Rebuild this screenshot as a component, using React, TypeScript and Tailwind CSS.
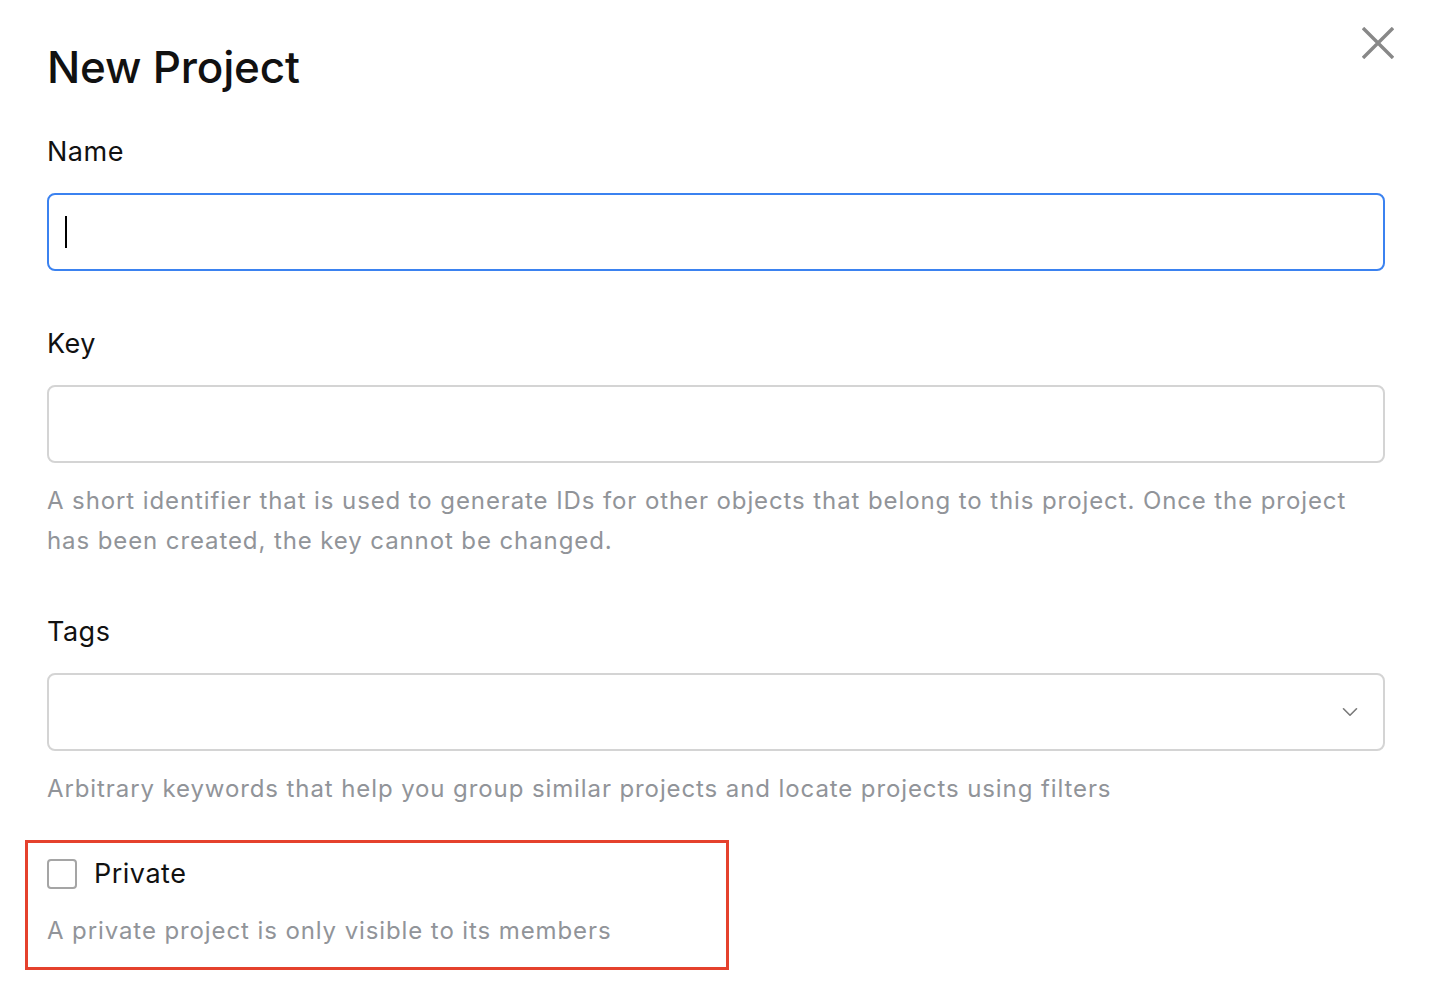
import { ChevronDown } from "lucide-react";

function Label({ children }: { children: string }) {
  return <p className="text-[27px] leading-[32px] tracking-[0.5px] text-[#111]">{children}</p>;
}

function Help({ children }: { children: string }) {
  return <p className="mt-[18px] text-[24px] leading-[40px] tracking-[0.9px] text-[#919499]">{children}</p>;
}

export default function App() {
  return (
    <div className="relative min-h-screen w-full bg-white pl-[47px] pr-[45px] pt-[40px] font-['Inter',sans-serif]">
      <button className="absolute right-[36px] top-[27px] text-[#888]" aria-label="Close">
        <svg width="32" height="32" viewBox="0 0 32 32" fill="none" stroke="currentColor" strokeWidth="3.4">
          <path d="M1 1L31 31M31 1L1 31" />
        </svg>
      </button>

      <h1 className="text-[44px] leading-[54px] font-medium text-[#111] tracking-[-0.2px]">New Project</h1>

      <div className="mt-[42px] flex flex-col">
        <Label>Name</Label>
        <div className="mt-[25px] flex h-[78px] items-center rounded-[8px] border-2 border-[#3b82f0] px-[16px]">
          <span className="h-[32px] w-[2px] bg-black" />
        </div>
      </div>

      <div className="mt-[57px] flex flex-col">
        <Label>Key</Label>
        <div className="mt-[25px] h-[78px] rounded-[8px] border-2 border-[#d4d4d4]" />
        <Help>
          A short identifier that is used to generate IDs for other objects that belong to this project. Once the project has been created, the key cannot be changed.
        </Help>
      </div>

      <div className="mt-[55px] flex flex-col">
        <Label>Tags</Label>
        <div className="mt-[25px] flex h-[78px] items-center justify-end rounded-[8px] border-2 border-[#d4d4d4] pr-[20px]">
          <ChevronDown size={26} strokeWidth={1.5} className="text-[#7a7a7a]" />
        </div>
        <Help>Arbitrary keywords that help you group similar projects and locate projects using filters</Help>
      </div>

      <div className="-ml-[22px] mt-[31px] w-[704px] border-[3px] border-[#e5412d] pb-[16px] pl-[19px] pt-[15px]">
        <label className="flex items-center gap-[17px]">
          <span className="h-[30px] w-[30px] rounded-[4px] border-2 border-[#a5a5a5] bg-white" />
          <span className="text-[27px] leading-[32px] tracking-[0.5px] text-[#111]">Private</span>
        </label>
        <p className="mt-[21px] text-[24px] leading-[40px] tracking-[0.9px] text-[#919499]">A private project is only visible to its members</p>
      </div>
    </div>
  );
}
